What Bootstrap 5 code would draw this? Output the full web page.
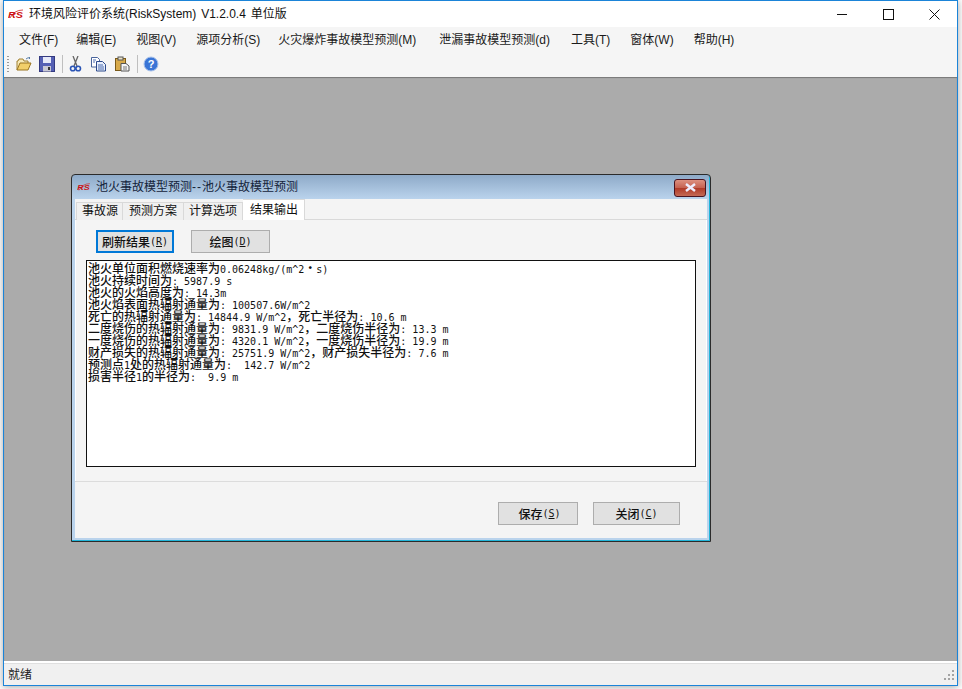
<!DOCTYPE html>
<html lang="zh-CN">
<head>
<meta charset="utf-8">
<title>环境风险评价系统</title>
<link href="https://cdn.jsdelivr.net/npm/bootstrap@5.3.0/dist/css/bootstrap.min.css" rel="stylesheet">
<style>
html,body{height:689px;overflow:hidden;background:#fdfdfd}
body{padding:0 4px 3px 3px;font:12px/16px "Liberation Sans","Noto Sans CJK SC",sans-serif;color:#111}
.app-win{height:686px;border:1px solid #1b84d8;box-shadow:0 1px 7px rgba(0,0,0,.35);background:#f5f5f5}
.title-row{height:26px;background:#fff;font-size:12px;padding-left:4px;word-spacing:1.5px}
.title-row .app-name{margin-left:5px}
.win-ctl{width:46px;height:26px}
.menu-row{height:23px;padding-left:15px;padding-top:2px;gap:20px;background:#f5f5f5;color:#1a1a1a}
.mn-a{margin-right:-2px}
.mn-b{margin-right:-2px}
.mn-c{margin-right:3px}
.mn-d{margin-right:1px}
.tool-row{height:27px;padding:0 0 0 3px;background:#f5f5f5;border-bottom-left-radius:3px}
.grip{width:2px;height:16px;margin-right:7px;background:repeating-linear-gradient(#9a9a9a 0 1px,transparent 1px 3px)}
.tool-ico{width:16px;height:16px}
.tool-sep{width:1px;height:18px;background:#bfbfbf}
.gap-5px{margin-left:5px}
.gap-6px{margin-left:6px}
.gap-7px{margin-left:7px}
.desk{background:#ababab;box-shadow:inset 0 1px 1px #777;min-height:0}
.status-row{height:24px;background:#f0f0f0;border-top:2px solid #fff;box-shadow:inset 0 1px 0 #dfdfdf;padding:2px 2px 0 4px;color:#222}
.dlg{left:67px;top:173px;width:640px;height:368px;border:1px solid #2b2b2b;border-radius:4px 4px 0 0;background:linear-gradient(#8eaac8,#bad3ec 24px);padding:0 3px 2px 3px;box-shadow:inset -1px -1px 0 #21b4d8}
.dlg-head{height:24px;padding-left:2px;color:#14233a}
.dlg-head .dlg-name{margin-left:5px}
.dash-pair{letter-spacing:1px}
.dlg-close{width:32px;height:18px;border:1px solid #4a1420;border-radius:3px;background:linear-gradient(#dd9080,#c46050 50%,#b03a28 52%,#c46a55);margin-right:1px;margin-top:1px}
.dlg-body{background:#f4f4f4;height:339px}
.tab-strip{height:21px;padding-left:1px;border-bottom:1px solid #d9d9d9}
.tab-item{height:18px;margin-top:3px;background:#f0f0f0;border:1px solid #d9d9d9;border-bottom:0;line-height:17px;white-space:nowrap}
.tab-item+.tab-item{border-left:0}
.tab-a{padding:0 4px 0 5px}
.tab-b{padding:0 6px}
.tab-c{padding:0 5px}
.tab-on{height:21px;margin-top:0;padding:2px 6px 0 7px;background:#fff;margin-bottom:-1px;position:relative}
.tab-page{height:262px;padding:10px 11px 0 11px;border-bottom:1px solid #dcdcdc;box-shadow:inset 1px 0 0 #fff,inset -1px 0 0 #fff}
.top-btns{padding-left:10px}
.sim{font-family:"DejaVu Sans Mono","Liberation Mono",monospace;font-size:10px}
.hz{display:inline-block;line-height:12px;font-family:"Noto Sans CJK SC",sans-serif;font-size:12px;font-weight:500}
.win-btn{height:23px;background:#e1e1e1;border:1px solid #adadad;border-radius:0;padding:0;color:#111;line-height:20px;display:flex;align-items:center;justify-content:center}
.win-btn:hover{background:#e1e1e1;border-color:#adadad;color:#111}
.w-refresh{width:78px;border:2px solid #0078d7;margin-right:17px}
.w-refresh:hover{border-color:#0078d7}
.w-draw{width:79px}
.w-save{width:80px;margin-right:15px;padding-left:3px}
.w-close{width:87px}
.log-box{height:207px;margin-top:7px;width:610px;background:#fff;border:1px solid #111;padding:1px 1px;line-height:12px;color:#111;overflow:hidden}
.log-box>div{height:12px;white-space:pre}
.mid-dot{width:12px;text-align:center}
.foot-row{height:56px;padding:20px 27px 0 0}
</style>
</head>
<body>
<div class="app-win d-flex flex-column position-relative">
  <div class="title-row d-flex align-items-center">
    <svg width="16" height="12" viewBox="0 0 16 12"><path d="M2 10 Q6 2 15 2" fill="none" stroke="#c22" stroke-width=".8"/><text x="0" y="10" font-family="Liberation Sans" font-size="9" font-weight="700" font-style="italic" fill="#c11" textLength="15" lengthAdjust="spacingAndGlyphs">RS</text></svg>
    <span class="app-name">环境风险评价系统(RiskSystem) V1.2.0.4 单位版</span>
    <div class="ms-auto d-flex">
      <div class="win-ctl d-flex align-items-center justify-content-center"><svg width="11" height="11"><path d="M0 5.500H10" stroke="#111"/></svg></div>
      <div class="win-ctl d-flex align-items-center justify-content-center"><svg width="11" height="11"><rect x=".5" y=".5" width="10" height="10" fill="none" stroke="#111"/></svg></div>
      <div class="win-ctl d-flex align-items-center justify-content-center"><svg width="11" height="11"><path d="M.5 .5L10.500 10.500M10.500 .5L.5 10.500" stroke="#111"/></svg></div>
    </div>
  </div>
  <div class="menu-row d-flex align-items-center">
    <span class="mn-a">文件(F)</span><span>编辑(E)</span><span>视图(V)</span><span class="mn-b">源项分析(S)</span><span class="mn-c">火灾爆炸事故模型预测(M)</span><span class="mn-d">泄漏事故模型预测(d)</span><span>工具(T)</span><span>窗体(W)</span><span>帮助(H)</span>
  </div>
  <div class="tool-row d-flex align-items-center">
    <div class="grip"></div>
    <svg class="tool-ico" viewBox="0 0 16 16"><path d="M1 14V5h1l1-2h4l1 2h4v2" fill="#f6e9b8" stroke="#a08030"/><path d="M1 14L4 7h11l-3 7z" fill="#f2cf6a" stroke="#9a7520"/><path d="M10 3q2-2 4-1M14 2l-1-1M14 2l-1 1" fill="none" stroke="#5a7fa8"/></svg>
    <svg class="tool-ico gap-7px" viewBox="0 0 16 16"><rect x=".5" y=".5" width="15" height="15" fill="#5560b4" stroke="#343a80"/><rect x="4" y="1" width="8" height="6" fill="#e6e9f8"/><rect x="4" y="10" width="8" height="5.500" fill="#c9c9d4"/><rect x="9" y="11" width="2" height="3" fill="#333"/></svg>
    <div class="tool-sep gap-7px"></div>
    <svg class="tool-ico gap-6px" viewBox="0 0 16 16"><path d="M4 0l4 10M9 0L5 10" stroke="#666" stroke-width="1.300"/><circle cx="3.800" cy="12.500" r="2.300" fill="none" stroke="#2b55b5" stroke-width="1.600"/><circle cx="9.200" cy="12.500" r="2.300" fill="none" stroke="#2b55b5" stroke-width="1.600"/></svg>
    <svg class="tool-ico gap-6px" viewBox="0 0 16 16"><path d="M.5 1.500h6l2 2V11H.5z" fill="#fff" stroke="#49649c"/><path d="M5.500 5.500h6l3 3V15h-9z" fill="#e8effb" stroke="#2d4a8c"/><path d="M2 4h3M2 6h2M7 9h5M7 11h6M7 13h6" stroke="#4a6ab0"/></svg>
    <svg class="tool-ico gap-7px" viewBox="0 0 16 16"><rect x="1.500" y="2.500" width="10" height="12" fill="#d8aa4a" stroke="#7a5a1a"/><rect x="4" y="1" width="5" height="3" fill="#e9e2c8" stroke="#555"/><path d="M7 7.500h5l3 2.500V15H7z" fill="#f5f5f5" stroke="#555"/><path d="M9 11h4M9 13h4" stroke="#777"/></svg>
    <div class="tool-sep gap-7px"></div>
    <svg class="tool-ico gap-5px" viewBox="0 0 16 16"><circle cx="8" cy="8" r="7" fill="#3a75d6" stroke="#a9c2ea"/><text x="8" y="12" text-anchor="middle" font-family="Liberation Sans" font-size="11" font-weight="700" fill="#fff">?</text></svg>
  </div>
  <div class="desk flex-grow-1"></div>
  <div class="status-row d-flex align-items-center">
    <span class="flex-grow-1">就绪</span>
    <svg width="11" height="11" viewBox="0 0 11 11" fill="#a3a3a3"><rect x="8" y="0" width="2" height="2"/><rect x="4" y="4" width="2" height="2"/><rect x="8" y="4" width="2" height="2"/><rect x="0" y="8" width="2" height="2"/><rect x="4" y="8" width="2" height="2"/><rect x="8" y="8" width="2" height="2"/></svg>
  </div>

  <div class="dlg position-absolute">
    <div class="dlg-head d-flex align-items-center">
      <svg width="14" height="10" viewBox="0 0 16 12"><path d="M2 10 Q6 2 15 2" fill="none" stroke="#c22" stroke-width=".8"/><text x="0" y="10" font-family="Liberation Sans" font-size="9" font-weight="700" font-style="italic" fill="#c11" textLength="15" lengthAdjust="spacingAndGlyphs">RS</text></svg>
      <span class="dlg-name">池火事故模型预测<span class="dash-pair">--</span>池火事故模型预测</span>
      <div class="dlg-close ms-auto d-flex align-items-center justify-content-center"><svg width="13" height="9" viewBox="0 0 13 9"><path d="M2 1l9 7M11 1L2 8" stroke="#eef" stroke-width="2.400"/></svg></div>
    </div>
    <div class="dlg-body">
      <div class="tab-strip d-flex">
        <div class="tab-item tab-a">事故源</div><div class="tab-item tab-b">预测方案</div><div class="tab-item tab-c">计算选项</div><div class="tab-item tab-on">结果输出</div>
      </div>
      <div class="tab-page">
        <div class="d-flex top-btns">
          <button type="button" class="btn win-btn w-refresh sim"><span class="hz">刷新结果</span>(<u>R</u>)</button>
          <button type="button" class="btn win-btn w-draw sim"><span class="hz">绘图</span>(<u>D</u>)</button>
        </div>
        <div class="log-box sim">
          <div><span class="hz">池火单位面积燃烧速率为</span>0.06248kg/(m^2<span class="hz mid-dot">·</span>s)</div>
          <div><span class="hz">池火持续时间为</span>: 5987.9 s</div>
          <div><span class="hz">池火的火焰高度为</span>: 14.3m</div>
          <div><span class="hz">池火焰表面热辐射通量为</span>: 100507.6W/m^2</div>
          <div><span class="hz">死亡的热辐射通量为</span>: 14844.9 W/m^2<span class="hz">，死亡半径为</span>: 10.6 m</div>
          <div><span class="hz">二度烧伤的热辐射通量为</span>: 9831.9 W/m^2<span class="hz">，二度烧伤半径为</span>: 13.3 m</div>
          <div><span class="hz">一度烧伤的热辐射通量为</span>: 4320.1 W/m^2<span class="hz">，一度烧伤半径为</span>: 19.9 m</div>
          <div><span class="hz">财产损失的热辐射通量为</span>: 25751.9 W/m^2<span class="hz">，财产损失半径为</span>: 7.6 m</div>
          <div><span class="hz">预测点</span>1<span class="hz">处的热辐射通量为</span>:  142.7 W/m^2</div>
          <div><span class="hz">损害半径</span>1<span class="hz">的半径为</span>:  9.9 m</div>
        </div>
      </div>
      <div class="foot-row d-flex justify-content-end">
        <button type="button" class="btn win-btn w-save sim"><span class="hz">保存</span>(<u>S</u>)</button>
        <button type="button" class="btn win-btn w-close sim"><span class="hz">关闭</span>(<u>C</u>)</button>
      </div>
    </div>
  </div>
</div>
</body>
</html>
